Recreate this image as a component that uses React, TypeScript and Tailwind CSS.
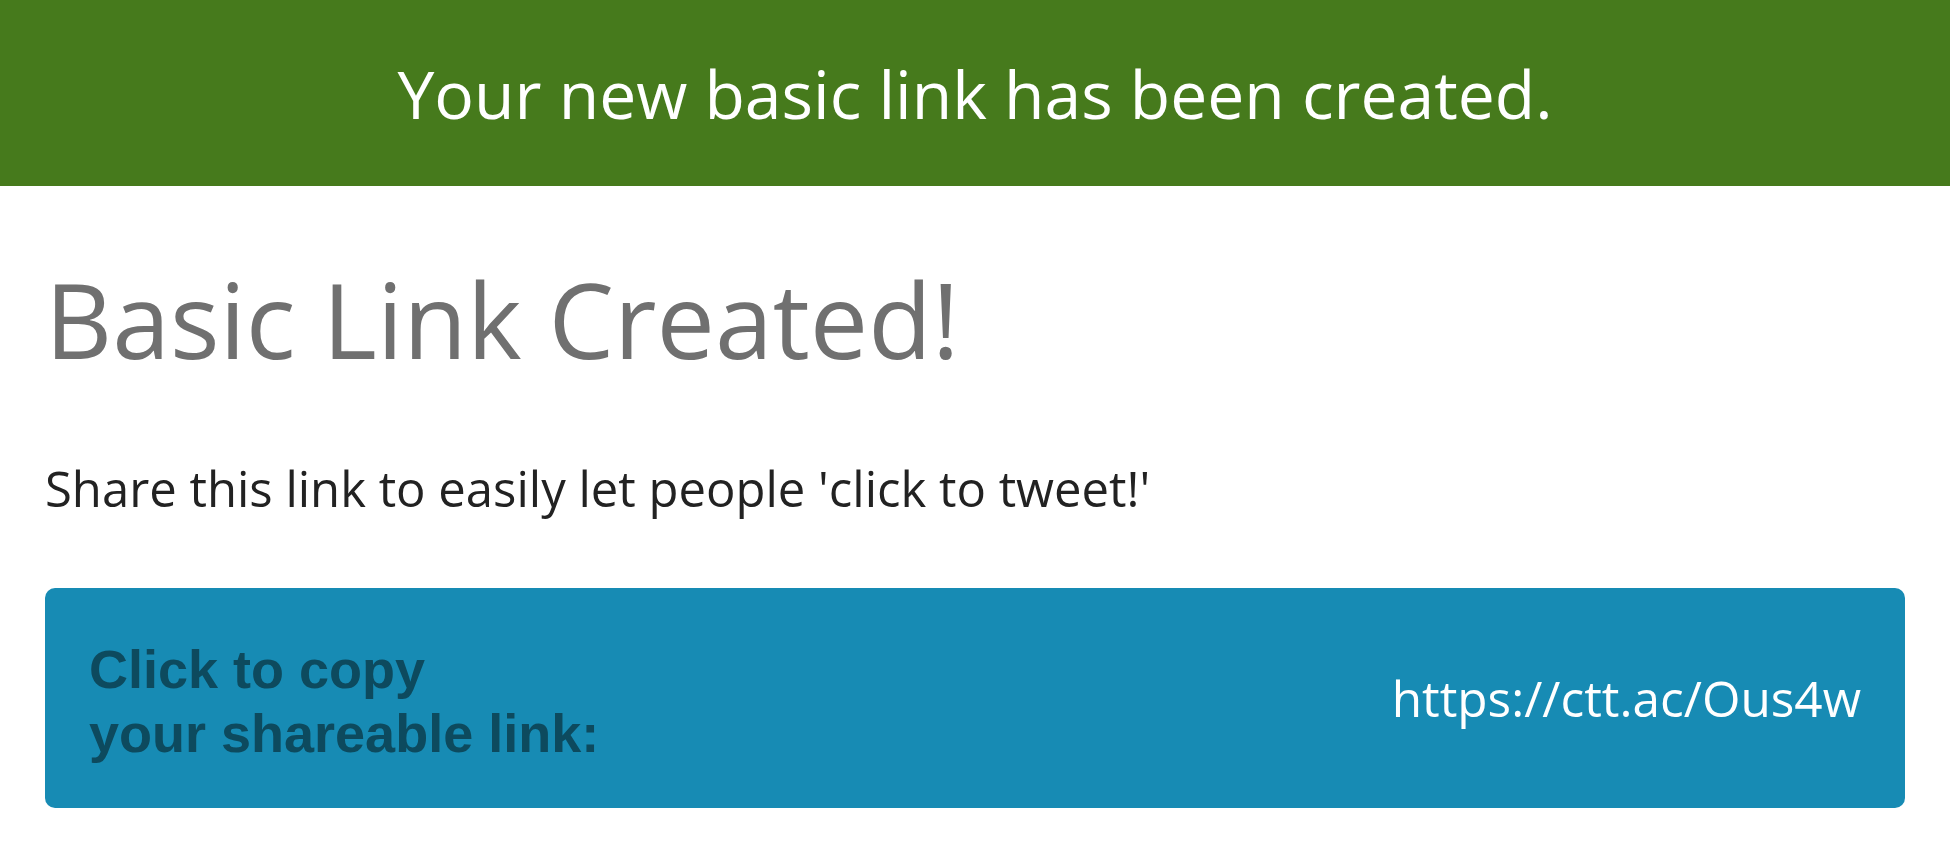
export default function App() {
  return (
    <div className="min-h-screen bg-white font-['Open_Sans',sans-serif]">
      {/* success banner */}
      <div className="flex h-[186px] items-center justify-center bg-[#467a1c]">
        <p className="text-[66px] leading-none text-white">Your new basic link has been created.</p>
      </div>

      <div className="px-[45px]">
        <h1 className="mt-[71px] text-[104px] leading-[1.2] text-[#707070]">Basic Link Created!</h1>

        <p className="mt-[70px] text-[49px] leading-[1.5] text-[#222222]">
          Share this link to easily let people 'click to tweet!'
        </p>

        <button
          type="button"
          className="mt-[63px] flex h-[220px] w-full cursor-pointer items-center justify-between rounded-[10px] bg-[#178bb4] px-[44px] text-left"
        >
          <span className="pt-[6px] font-['Liberation_Sans',Arial,sans-serif] text-[54px] font-bold leading-[64px] text-[#0d4a5e]">
            Click to copy
            <br />
            your shareable link:
          </span>
          <span className="text-[49.5px] leading-[1.35] text-white">https://ctt.ac/Ous4w</span>
        </button>
      </div>
    </div>
  );
}
